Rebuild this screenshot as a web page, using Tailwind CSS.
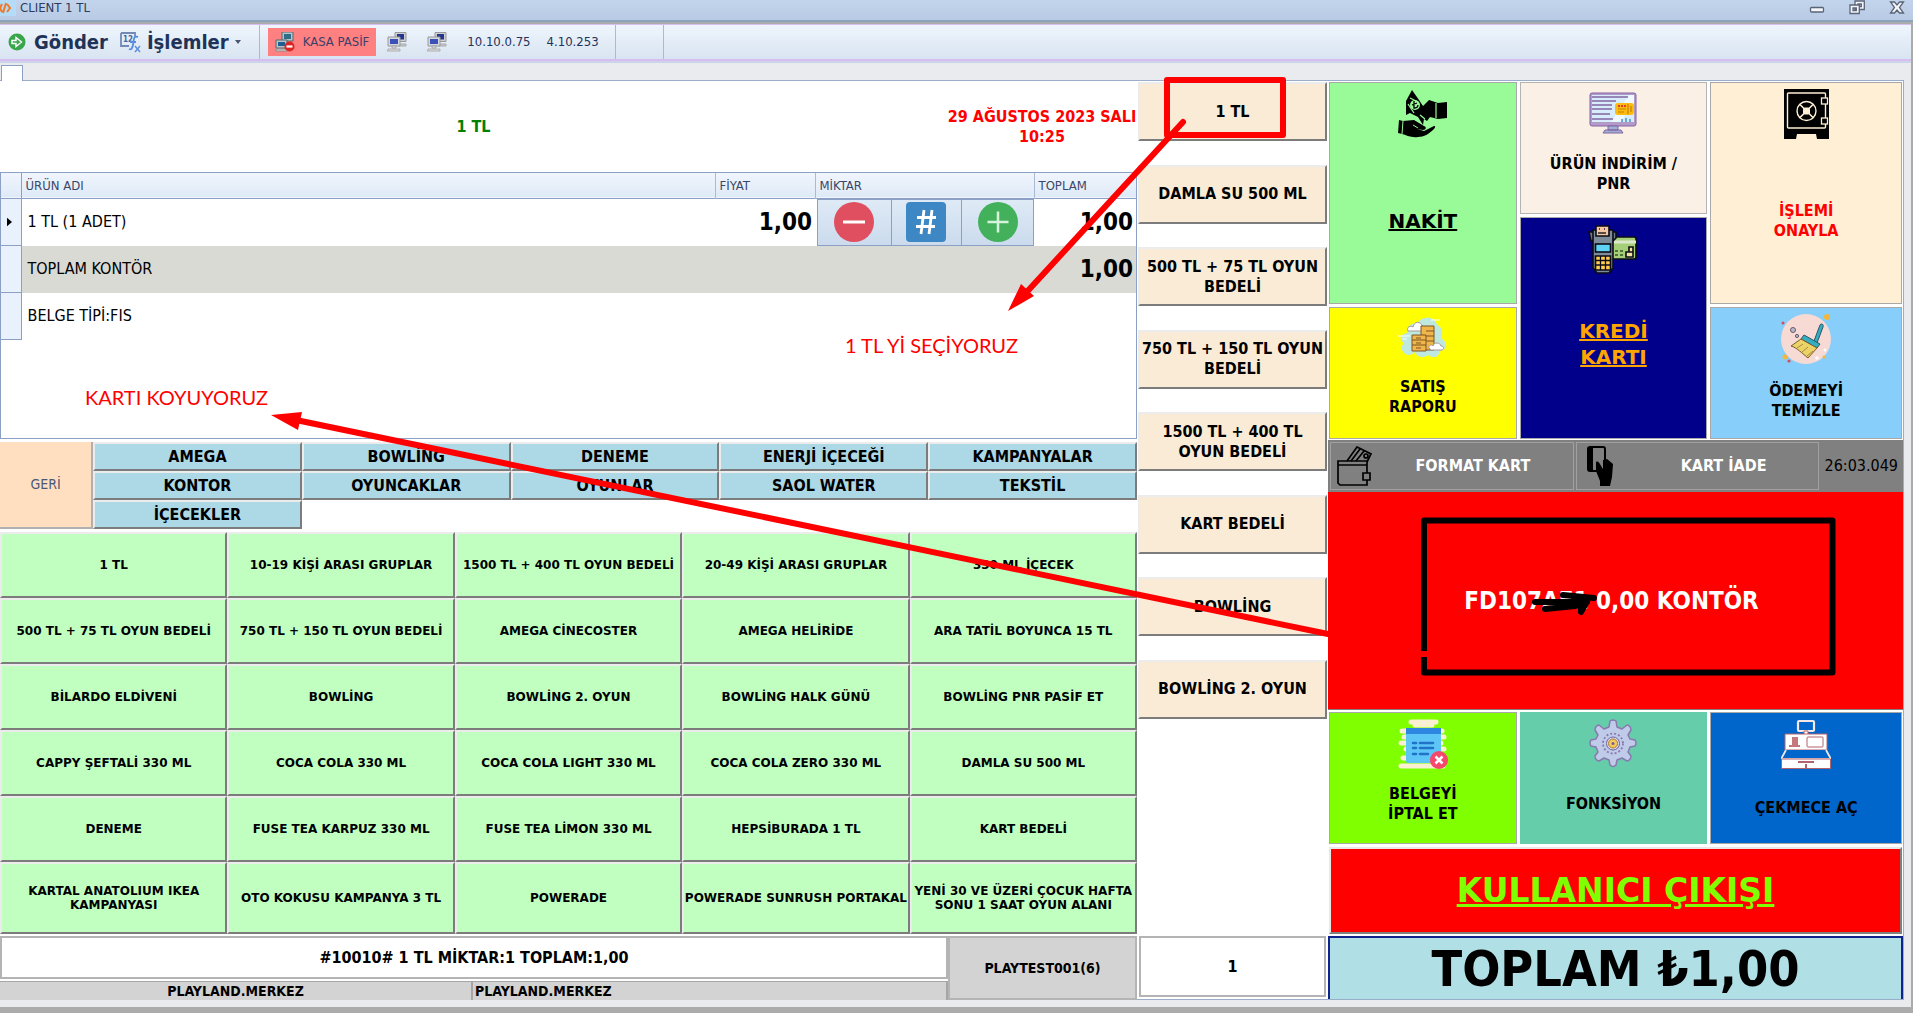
<!DOCTYPE html>
<html lang="tr">
<head>
  <meta charset="UTF-8" />
  <meta name="viewport" content="width=device-width, initial-scale=1.0"/>
  <title>CLIENT 1 TL</title>
  <script src="https://cdn.jsdelivr.net/npm/@tailwindcss/browser@4"></script>
</head>
<body class="relative min-h-screen flex flex-col bg-[#ababab] text-black font-['DejaVu_Sans_Condensed','Noto_Sans',sans-serif]">

  <!-- window title bar -->
  <header class="h-[22px] flex items-start justify-between bg-linear-to-b from-[#c3d5ec] to-[#b9cbe4] border-b-2 border-[#8ba3bd] text-[#2c3b5e]">
    <div class="flex items-center gap-1">
      <svg class="w-4 h-4" viewBox="0 0 16 16"><rect width="16" height="16" fill="#b4dcf8"/><path d="M2 4 0 8l2 4M7 4l3 4-3 4M6 3 3 13" fill="none" stroke="#f07828" stroke-width="2"/></svg>
      <h1 class="text-[13px] leading-4">CLIENT 1 TL</h1>
    </div>
    <div class="flex items-center gap-6 pr-2">
      <button aria-label="Küçült"><svg class="w-4 h-4" viewBox="0 0 16 16"><rect x="1.500" y="7.500" width="13" height="4.500" rx="1" fill="#f4f6fa" stroke="#5a6478" stroke-width="1.300"/></svg></button>
      <button aria-label="Geri yükle"><svg class="w-4 h-4" viewBox="0 0 16 16" fill="#f4f6fa" stroke="#5a6478" stroke-width="1.300"><path d="M6 1h9.300v8.500H6zM9 4h3.300v2.500H9z" fill-rule="evenodd"/><path d="M1 5h9.300v8.500H1zM4 8h3.300v2.500H4z" fill-rule="evenodd"/></svg></button>
      <button aria-label="Kapat"><svg class="w-4 h-4" viewBox="0 0 16 16"><path d="M1.500 2h4L8 5l2.500-3h4L10.500 7.500l4 5.500h-4L8 10l-2.500 3h-4l4-5.500z" fill="#f4f6fa" stroke="#5a6478" stroke-width="1.300"/></svg></button>
    </div>
  </header>

  <!-- toolbar -->
  <nav class="mt-[2px] mr-[2px] h-[37px] shrink-0 flex items-center border-t border-b-2 border-[#d8bdf0] bg-linear-to-b from-[#eff5fd] to-[#d8e4f1] text-[#1f3358]">
    <button class="ml-2 flex items-center gap-2 text-[20px] leading-6 font-bold">
      <svg class="w-[18px] h-[18px]" viewBox="0 0 18 18"><circle cx="9" cy="9" r="8.500" fill="#3aa64c"/><path d="M4 7.500h4V4.500L13.500 9 8 13.500v-3H4z" fill="#3aa64c" stroke="#fff" stroke-width="1.400"/></svg>
      Gönder
    </button>
    <button class="ml-3 flex items-center gap-[6px] text-[20px] leading-6 font-bold">
      <svg class="w-[21px] h-[21px]" viewBox="0 0 21 21"><path d="M1 1h14v4M1 1v13h8" fill="none" stroke="#7389b5" stroke-width="1.800"/><text x="3" y="10" font-size="8" fill="#4a66a0">12</text><path d="M18 5c-5-2-4 4-5 8s-2 5-4 4M10 10h6" fill="none" stroke="#5a8de0" stroke-width="1.900"/><path d="m15 14 5 6m0-6-5 6" stroke="#5a8de0" stroke-width="1.400"/></svg>
      İşlemler
      <svg class="w-[6px] h-1" viewBox="0 0 6 4"><path d="M0 0h6L3 4z" fill="#4a5670"/></svg>
    </button>
    <div class="ml-[18px] h-full border-l border-[#a9bbd4]"></div>
    <button class="ml-2 h-7 px-[7px] flex items-center gap-2 bg-[#ff8080] text-[13px] text-[#3a3f68]">
      <svg class="w-5 h-5" viewBox="0 0 20 20"><path d="M7 0h11v9H7z" fill="#b9c4c8" stroke="#55666e"/><path d="M9 2h7v5H9z" fill="#2e6e88"/><path d="M1 8h11v8H1z" fill="#b9c4c8" stroke="#55666e"/><path d="M3 10h7v4H3z" fill="#1e5e90"/><path d="M1 17h11v2H1z" fill="#ddd" stroke="#888"/><circle cx="14.500" cy="14.500" r="5" fill="#df2424"/><path d="M11.500 14.500h6" stroke="#fff" stroke-width="2.200"/></svg>
      KASA PASİF
    </button>
    <svg class="ml-[11px] w-5 h-5" viewBox="0 0 20 20"><path d="M8 .5h11v9H8z" fill="#c9ced3" stroke="#999"/><path d="M10 2h7v5.500h-7z" fill="#27348e"/><path d="M12 12h7v2h-7z" fill="#ccc" stroke="#aaa"/><path d="M1 5h12v9H1z" fill="#d4d8dc" stroke="#999"/><path d="M3 7h8v5H3z" fill="#3b50b8"/><path d="M5 14h4v2H5zM1 17h12v2H0z" fill="#ddd" stroke="#999" stroke-width=".7"/></svg>
    <svg class="ml-5 w-5 h-5" viewBox="0 0 20 20"><path d="M8 .5h11v9H8z" fill="#c9ced3" stroke="#999"/><path d="M10 2h7v5.500h-7z" fill="#27348e"/><path d="M12 12h7v2h-7z" fill="#ccc" stroke="#aaa"/><path d="M1 5h12v9H1z" fill="#d4d8dc" stroke="#999"/><path d="M3 7h8v5H3z" fill="#3b50b8"/><path d="M5 14h4v2H5zM1 17h12v2H0z" fill="#ddd" stroke="#999" stroke-width=".7"/></svg>
    <span class="ml-5 text-[13px]">10.10.0.75</span>
    <span class="ml-4 text-[13px]">4.10.253</span>
    <div class="ml-4 w-[49px] h-full border-x border-[#a9bbd4]"></div>
  </nav>

  <div class="flex-1 flex flex-col mr-[2px] mb-[6px] pr-[7px] pb-[7px] bg-[#eaebef] border-t-2 border-[#ccd4ea]">
    <div class="h-[17px] flex items-end">
      <div class="relative z-10 ml-px w-[22px] h-4 -mb-px bg-white border border-b-0 border-[#8ba0c4]"></div>
    </div>

    <main class="flex-1 grid grid-cols-[minmax(0,1137fr)_minmax(0,191fr)_minmax(0,575fr)] bg-white border-t border-r border-b border-[#9aadcb]">

      <!-- left: document, categories, products -->
      <section class="flex flex-col">
        <div class="h-[91px] grid grid-cols-[947fr_190fr] items-center text-center font-bold text-[16px] leading-5">
          <div class="text-[#008000]">1 TL</div>
          <div class="text-[#ff0000] whitespace-nowrap">29 AĞUSTOS 2023 SALI<br>10:25</div>
        </div>

        <div class="h-[267px] border border-[#8ba0c4]">
          <table class="w-full table-fixed border-collapse text-[16px]">
            <colgroup><col class="w-5"><col><col class="w-[100px]"><col class="w-[219px]"><col class="w-[102px]"></colgroup>
            <thead>
              <tr class="h-[25px] bg-linear-to-b from-[#f0f5fd] to-[#dfeaf7] text-[13px] text-[#3a4668] text-left border-b border-[#8ba0c4]">
                <th class="border-r border-[#8ba0c4]"></th>
                <th class="px-1 font-normal border-r border-[#a9bbd4]">ÜRÜN ADI</th>
                <th class="px-1 font-normal border-r border-[#a9bbd4]">FİYAT</th>
                <th class="px-1 font-normal border-r border-[#a9bbd4]">MİKTAR</th>
                <th class="px-1 font-normal">TOPLAM</th>
              </tr>
            </thead>
            <tbody>
              <tr class="h-[47px]">
                <td class="bg-[#e8f1fc] border-r border-b border-[#8ba0c4]"><svg class="ml-[6px] w-[5px] h-[10px]" viewBox="0 0 6 10"><path d="M0 0l6 5-6 5z"/></svg></td>
                <td class="px-[6px]">1 TL (1 ADET)</td>
                <td class="pr-[3px] text-right text-[24px] font-bold">1,00</td>
                <td class="p-0 pl-[2px]">
                  <div class="h-[47px] grid grid-cols-[74fr_71fr_71fr] border border-[#8ba0c4] divide-x divide-[#8ba0c4] bg-linear-to-b from-[#dfeaf6] to-[#cbdbed]">
                    <button class="flex items-center justify-center" aria-label="Azalt"><svg class="size-10" viewBox="0 0 40 40"><circle cx="20" cy="20" r="20" fill="#e04f5f"/><path d="M9 20h22" stroke="#fff" stroke-width="3"/></svg></button>
                    <button class="flex items-center justify-center" aria-label="Miktar gir"><svg class="size-10" viewBox="0 0 40 40"><rect width="40" height="40" rx="4" fill="#3c87c4"/><path d="M18 8l-3 24M26 8l-3 24M11 15.500h19M10 24.500h19" stroke="#fff" stroke-width="2.800"/></svg></button>
                    <button class="flex items-center justify-center" aria-label="Arttır"><svg class="size-10" viewBox="0 0 40 40"><circle cx="20" cy="20" r="20" fill="#43b05c"/><path d="M9.500 20h21M20 9.500v21" stroke="#d8f3dc" stroke-width="2.500"/></svg></button>
                  </div>
                </td>
                <td class="pr-[3px] text-right text-[24px] font-bold">1,00</td>
              </tr>
              <tr class="h-[47px]">
                <td class="bg-[#e8f1fc] border-r border-b border-[#8ba0c4]"></td>
                <td colspan="3" class="px-[6px] bg-[#d9dad4]">TOPLAM KONTÖR</td>
                <td class="pr-[3px] text-right text-[24px] font-bold bg-[#d9dad4]">1,00</td>
              </tr>
              <tr class="h-[47px]">
                <td class="bg-[#e8f1fc] border-r border-b border-[#8ba0c4]"></td>
                <td colspan="4" class="px-[6px]">BELGE TİPİ:FIS</td>
              </tr>
            </tbody>
          </table>
        </div>

        <div class="mt-[3px] h-[87px] flex">
          <button class="w-[93px] bg-[#ffdfc0] border-r-2 border-b-2 border-[#b0b0b0] text-[14px] text-[#4a5878]">GERİ</button>
          <div id="categories" class="flex-1 grid grid-cols-5 grid-rows-3"></div>
        </div>

        <div id="products" class="mt-[3px] flex-1 grid grid-cols-5 grid-rows-[repeat(5,66px)_1fr]"></div>

        <div class="mt-[2px] h-[63px] grid grid-cols-[948fr_189fr]">
          <div class="flex flex-col">
            <input type="text" readonly aria-label="Son işlem" value="#10010# 1 TL MİKTAR:1 TOPLAM:1,00" class="w-full h-[43px] border-2 border-[#b4b4b4] bg-white text-center font-bold text-[16px]">
            <div class="mt-[2px] flex-1 grid grid-cols-2 border-t border-r-2 border-[#a6a6a6] bg-[#d3d3d3] font-bold text-[14px] leading-[18px]">
              <div class="text-center border-r-2 border-[#a6a6a6]">PLAYLAND.MERKEZ</div>
              <div class="pl-[2px]">PLAYLAND.MERKEZ</div>
            </div>
          </div>
          <div class="flex items-center justify-center bg-[#d3d3d3] border-2 border-[#b4b4b4] font-bold text-[14px]">PLAYTEST001(6)</div>
        </div>
      </section>

      <!-- middle: quick buttons -->
      <section class="flex flex-col justify-between">
        <div id="quick" class="h-[661px] grid grid-rows-8 pt-px px-px"></div>
        <div class="px-[2px] pb-[2px]">
          <input type="text" readonly aria-label="Adet" value="1" class="w-full h-[61px] border-2 border-[#b4b4b4] bg-white text-center font-bold text-[16px]">
        </div>
      </section>

      <!-- right: actions -->
      <section class="flex flex-col font-bold text-[16px] leading-5">
        <div class="mt-px px-px grid grid-cols-[188fr_188fr_192fr] grid-rows-[132px_87px_132px] gap-[3px]">
          <button class="row-span-2 flex flex-col items-center pt-[6px] border border-[#a8a8a8] bg-[#98fb98]">
            <svg class="size-[50px]" viewBox="0 0 50 50">
              <path d="M8 12 14 1l7 10 4 6 6-6 9 3 9-1v16l-9 1-8-2-3 4-3-2-1 6-5-8-8-4-4 2z"/>
              <path d="M38 14v15M10 15l6 9M12 9l6 3M22 26l5 4" stroke="#98fb98" stroke-width="1.200" fill="none"/>
              <circle cx="17" cy="16" r="5" fill="#98fb98"/><path d="M16 12v7c2 0 4-1 4-3M14 16l5-2" stroke="#000" stroke-width="1.300" fill="none"/>
              <path d="M1 31l4 1 11-1 10 6c3 1 2 4-1 4l-6-1 7 2 10-5c2 0 1 2 0 3-5 5-10 8-16 8-7 1-12-2-16-3l-4-1z"/>
              <path d="M5 32l-1 13M15 36l5 3" stroke="#98fb98" stroke-width="1"/>
            </svg>
            <span class="flex-1 flex items-center font-['DejaVu_Sans',sans-serif] text-[20px] leading-[26px] underline">NAKİT</span>
          </button>

          <button class="flex flex-col items-center pt-[6px] border border-[#b4b4b4] bg-[#faf0e6]">
            <svg class="size-[50px]" viewBox="0 0 50 50">
              <rect x="2" y="4" width="46" height="33" rx="2" fill="#b39ac8" stroke="#8365a3"/><rect x="4" y="6" width="42" height="27" fill="#d7edfb"/>
              <path d="m23 33 18-27h5v7L33 33z" fill="#edf8ff"/>
              <path d="M4 8h36M4 12h24M4 16h20M4 20h20M4 25h18M4 30h21" stroke="#8365a3" stroke-width="1.600"/>
              <rect x="27" y="14" width="19" height="12" rx="3" fill="#fdbb10"/><path d="M30 17h8" stroke="#e23b2e" stroke-width="1.800" stroke-dasharray="2 1"/><path d="M30 20h8M30 23h6M40 15v10M43 17v6" stroke="#c78100" stroke-width="1.200"/>
              <path d="M34 30v3M38 29v4M42 30v3" stroke="#4694c8" stroke-width="1.500"/>
              <path d="M20 37h10v4H20zM17 41h16l2 3H15z" fill="#9fb0d4" stroke="#8365a3"/>
            </svg>
            <span class="flex-1 flex items-center pb-1">ÜRÜN İNDİRİM /<br>PNR</span>
          </button>

          <button class="row-span-2 flex flex-col items-center pt-[6px] border border-[#a8a8a8] bg-[#ffefd5] text-[#ff0000]">
            <svg class="size-[50px]" viewBox="0 0 50 50">
              <path d="M3 0h45v50H36l-1-5H16l-1 5H3z"/>
              <rect x="6.500" y="4" width="38" height="35" rx="1" fill="none" stroke="#ffefd5" stroke-width="1.400"/>
              <rect x="40.500" y="9" width="6" height="6" fill="#000" stroke="#ffefd5" stroke-width="1.300"/><rect x="40.500" y="29" width="6" height="6" fill="#000" stroke="#ffefd5" stroke-width="1.300"/>
              <circle cx="25.500" cy="22" r="9.500" fill="none" stroke="#ffefd5" stroke-width="1.400"/><path d="m19 15.500 13 13m0-13-13 13" stroke="#ffefd5" stroke-width="1.600"/><rect x="22" y="18.500" width="7" height="7" rx="2" fill="#ffefd5"/>
            </svg>
            <span class="flex-1 flex items-center">İŞLEMİ<br>ONAYLA</span>
          </button>

          <button class="row-span-2 flex flex-col items-center pt-[6px] pb-6 border border-[#a8a8a8] bg-[#00008b] text-[#ffa500]">
            <svg class="size-[50px]" viewBox="0 0 50 50" stroke="#0b0b14" stroke-width="1.600">
              <rect x="22" y="13" width="26" height="22" rx="2" fill="#a5d077"/><path d="M23 18h25" stroke="#dbe8cc" stroke-width="3"/><path d="M27 27h3m2 0h3M27 31h3m2 0h3" stroke="#35502b"/><path d="M38 28h7v5h-7zM41 23h4v5h-4z" fill="#f2e3a0"/>
              <path d="M1 8h6v9H3zM22 8h6v6l-3 3h-3z" fill="#6f7b88"/>
              <path d="M5 6h20v38l-4 5H9l-4-5z" fill="#7d8c99"/><path d="M8 2h13v10H8z" fill="#f4c7a4"/><path d="M10 9h8M11 5h1m4 0h1" stroke="#222"/>
              <rect x="7.500" y="20" width="15" height="8" fill="#5fd3f3"/><path d="M7.500 32h15v14h-15z" fill="#ffce50"/><path d="M7.500 36.500h15M7.500 41h15M12.500 32v14M17.500 32v14" stroke-width="1.300"/>
            </svg>
            <span class="flex-1 flex items-center font-['DejaVu_Sans',sans-serif] text-[20px] leading-[26px] underline">KREDİ<br>KARTI</span>
          </button>

          <button class="flex flex-col items-center pt-[6px] border border-[#a8a8a8] bg-[#ffff00]">
            <svg class="size-[50px]" viewBox="0 0 50 50">
              <path d="M11 41c-6 0-10-7-5-12-6-3-3-9 3-10-1-7 6-11 10-9 4-9 19-8 20 1 6 2 6 9 4 13 8 5 5 13-1 13-2 8-8 7-12 4-5 4-11 2-13-3-2 2-4 3-6 3z" fill="#bfe9e0"/>
              <path d="M0 22h12M4 25h5M33 6h9" stroke="#fff"/>
              <path d="M10 17c-2-4 3-6 5-4 1-6 8-6 9-1 3 0 4 4 1 5z" fill="#fff" stroke="#a59a98"/>
              <g fill="#f0b64a" stroke="#7c5426"><path d="M23 12h13v24H23z"/><path d="M14 21h14v16H14z"/><path d="M14 26h14M14 31h14M28 17h8M28 22h8M28 27h8M18 24h5m-5 5h5m-5 5h5" fill="none"/></g>
              <path d="M31 34c-1-3 3-4 4-2 1-4 7-4 8 0 4 0 3 4 0 4H33z" fill="#fff" stroke="#a59a98"/>
            </svg>
            <span class="flex-1 flex items-center pb-2">SATIŞ<br>RAPORU</span>
          </button>

          <button class="flex flex-col items-center pt-[6px] border border-[#a8a8a8] bg-[#87cefa]">
            <svg class="size-[50px]" viewBox="0 0 50 50">
              <circle cx="25" cy="25" r="25" fill="#f8dad4"/><circle cx="12" cy="16" r="2.500" fill="#b9b9c9" stroke="#6a5a6a"/><circle cx="16" cy="22" r="1.600" fill="#b9b9c9" stroke="#6a5a6a"/>
              <path d="m33 27 6-16c1-2 4-1 3 2l-6 16z" fill="#35aebf" stroke="#2c5468"/><path d="m23 21 16 9-3 4-16-9z" fill="#35aebf" stroke="#2c5468"/>
              <path d="M20 25 10 32c5 1 12 8 17 12l9-10z" fill="#ecd367" stroke="#7a5d31"/><path d="m16 34 6-4m-1 8 6-5m-1 9 6-5" stroke="#a98a3b"/>
              <circle cx="46" cy="3" r="3" fill="#f3b63a"/><circle cx="2" cy="9" r="1.500" fill="#d94a63"/><circle cx="4" cy="43" r="2.500" fill="#f3b63a"/><circle cx="8" cy="47" r="1.600" fill="#d94a63"/><circle cx="36" cy="44" r="1.700" fill="#fff"/><circle cx="44" cy="36" r="1.400" fill="#fff"/><circle cx="43" cy="43" r="1.500" fill="#f3b63a"/>
            </svg>
            <span class="flex-1 flex items-center">ÖDEMEYİ<br>TEMİZLE</span>
          </button>
        </div>

        <div class="mt-px h-[52px] flex items-stretch bg-[#808080] p-[2px] gap-[2px] text-white">
          <button class="flex-[243] flex items-center border border-[#a0a0a0]">
            <svg class="ml-[6px] w-9 h-10" viewBox="0 0 36 40" fill="none" stroke="#000" stroke-width="1.700"><path d="M1 15h29v24H3l-2-2zM1 15v4h29"/><path d="M10 15 20 1l14 7-4 8M14 15l9-12M19 15l8-10"/><circle cx="29" cy="10" r="2"/><path d="M26 27h7v7h-7z" fill="#808080"/></svg>
            <span class="flex-1 text-center">FORMAT KART</span>
          </button>
          <button class="flex-[243] flex items-center border border-[#a0a0a0]">
            <svg class="ml-[10px] w-[26px] h-10" viewBox="0 0 26 40"><rect x="1" y="1" width="17" height="24" rx="2" fill="none" stroke="#000" stroke-width="2"/><path d="M4 2v22" stroke="#000" stroke-width="4"/><path d="M9 16c3-2 4 3 7 7V14l4-1 6 5-1 13-2 9H13V35L9 25z"/></svg>
            <span class="flex-1 text-center pl-4">KART İADE</span>
          </button>
          <span class="flex-[80] flex items-center justify-center font-normal text-black">26:03.049</span>
        </div>

        <div class="flex-1 flex items-center justify-center pr-2 bg-[#ff0000] border-b border-[#808080] text-white text-[24px]">FD107AF1 0,00 KONTÖR</div>

        <div class="mt-[2px] px-px h-[132px] grid grid-cols-[188fr_188fr_192fr] gap-[3px]">
          <button class="flex flex-col items-center pt-[6px] border border-[#a8a8a8] bg-[#7fff00]">
            <svg class="size-[50px]" viewBox="0 0 50 50">
              <g stroke="#fbf0d2" stroke-width="5" stroke-linecap="round"><path d="M13 3h25M17 6h17M4 12h40M6 18h40M3 24h40M8 30h38M5 39h39M3 47h42"/></g>
              <rect x="8" y="9" width="35" height="35" rx="2" fill="#5ec5f7"/><path d="M8 9h35v6H8z" fill="#2f86e0"/>
              <path d="M15 24h3M15 29h3M15 35h3M22 24h13M22 29h13M22 35h8" stroke="#2173c8" stroke-width="2.600" stroke-linecap="round"/>
              <circle cx="41" cy="41" r="9" fill="#f7476b"/><path d="m37.500 37.500 7 7m0-7-7 7" stroke="#fff" stroke-width="2.600"/>
            </svg>
            <span class="flex-1 flex items-center pb-1">BELGEYİ<br>İPTAL ET</span>
          </button>
          <button class="flex flex-col items-center pt-[6px] bg-[#66cdaa]">
            <svg class="size-[50px]" viewBox="0 0 50 50">
              <g fill="#bfcbe8" stroke="#8a79b0" stroke-width="1.500" stroke-linejoin="round"><path d="m21 9 1-6q3-2 6 0l1 6 5 2 5-4q4 1 4 5l-3 5 2 4 5 1q2 3 0 6l-5 1-2 5 3 4q0 4-4 5l-5-3-5 2-1 5q-3 3-6 0l-1-5-5-2-5 3q-4-1-4-5l3-4-2-5-5-1q-2-3 0-6l5-1 2-4-3-5q0-4 4-5l5 4z"/></g>
              <circle cx="25" cy="25.500" r="10" fill="none" stroke="#8a79b0" stroke-width="1.800" stroke-dasharray="2 2"/><circle cx="25" cy="25.500" r="6.500" fill="#d6dcf0" stroke="#75609b"/><circle cx="25" cy="25.500" r="4.500" fill="#f8ca57" stroke="#a87b3a"/><circle cx="25" cy="25.500" r="1.500" fill="#75609b"/>
            </svg>
            <span class="flex-1 flex items-center pb-1">FONKSİYON</span>
          </button>
          <button class="flex flex-col items-center pt-[6px] border border-[#a8a8a8] bg-[#0066cc]">
            <svg class="size-[50px]" viewBox="0 0 50 50" stroke="#b4636c" stroke-width="1">
              <rect x="17" y="2" width="16" height="10" rx="1" fill="#0066cc" stroke="#f5e8e8" stroke-width="2.200"/><path d="M23 12h4v4h-4z" fill="#fff"/>
              <path d="M4 15h42v16H4z" fill="#fff"/><path d="M11 18h6v8h2v2H8v-2h3z" fill="#c4777c" stroke="none"/><rect x="26" y="18" width="16" height="10" rx="1" fill="#fff"/>
              <path d="m5 31-5 9h50l-5-9" fill="#0066cc" stroke="#f5e8e8" stroke-width="1.800"/><path d="M.500 40h49v9.500H.500z" fill="#fff"/><path d="M17 43h16M25 45v4" stroke-width="2"/>
            </svg>
            <span class="flex-1 flex items-center pt-1">ÇEKMECE AÇ</span>
          </button>
        </div>

        <button class="mt-[3px] mx-px h-[87px] bg-[#ff0000] border-2 border-t-[#e8e8e8] border-l-[#e8e8e8] border-r-[#808080] border-b-[#808080] font-['DejaVu_Sans',sans-serif] text-[33px] leading-10 text-[#7fff00] underline">KULLANICI ÇIKIŞI</button>

        <div class="mt-[2px] h-[63px] flex items-center justify-center bg-[#b0e0e6] border-2 border-b-0 border-[#10238c] text-[50px] leading-[60px]">TOPLAM ₺1,00</div>
      </section>
    </main>
  </div>

  <!-- training notes drawn over the screen -->
  <svg class="absolute inset-0 w-full h-full pointer-events-none" viewBox="0 0 1913 1013" preserveAspectRatio="none">
    <g fill="none" stroke="#ff0000" stroke-width="6" stroke-linecap="round" stroke-linejoin="round">
      <path d="M1167 80h116v55h-116z"/>
      <path d="M1183 122 1024 295"/>
      <path d="M1328 634 296 420"/>
    </g>
    <path d="M1008 311l13-27 13 12zM271 415l31-3-4 18z" fill="#ff0000"/>
    <path d="M1424 651V520.500h408.500v152H1424V657" fill="none" stroke="#000" stroke-width="6" stroke-linejoin="round"/>
    <path d="M1535 602h52M1563 595l31 3M1545 609l40-4-4 7M1581 600v11" fill="none" stroke="#000" stroke-width="6" stroke-linecap="round"/>
    <g fill="#ff0000" class="font-[Lato,sans-serif] text-[20px]">
      <text x="845" y="353">1 TL Yİ SEÇİYORUZ</text>
      <text x="85" y="405">KARTI KOYUYORUZ</text>
    </g>
  </svg>

  <script>
    let categories = ["AMEGA", "BOWLİNG", "DENEME", "ENERJİ İÇECEĞİ", "KAMPANYALAR", "KONTOR", "OYUNCAKLAR", "OYUNLAR", "SAOL WATER", "TEKSTİL", "İÇECEKLER"];

    let products = [
      "1 TL", "10-19 KİŞİ ARASI GRUPLAR", "1500 TL + 400 TL OYUN BEDELİ", "20-49 KİŞİ ARASI GRUPLAR", "330 ML İÇECEK",
      "500 TL + 75 TL OYUN BEDELİ", "750 TL + 150 TL OYUN BEDELİ", "AMEGA CİNECOSTER", "AMEGA HELİRİDE", "ARA TATİL BOYUNCA 15 TL",
      "BİLARDO ELDİVENİ", "BOWLİNG", "BOWLİNG 2. OYUN", "BOWLİNG HALK GÜNÜ", "BOWLİNG PNR PASİF ET",
      "CAPPY ŞEFTALİ 330 ML", "COCA COLA 330 ML", "COCA COLA LIGHT 330 ML", "COCA COLA ZERO 330 ML", "DAMLA SU 500 ML",
      "DENEME", "FUSE TEA KARPUZ 330 ML", "FUSE TEA LİMON 330 ML", "HEPSİBURADA 1 TL", "KART BEDELİ",
      "KARTAL ANATOLIUM IKEA KAMPANYASI", "OTO KOKUSU KAMPANYA 3 TL", "POWERADE", "POWERADE SUNRUSH PORTAKAL", "YENİ 30 VE ÜZERİ ÇOCUK HAFTA SONU 1 SAAT OYUN ALANI"
    ];

    let quick = ["1 TL", "DAMLA SU 500 ML", "500 TL + 75 TL OYUN BEDELİ", "750 TL + 150 TL OYUN BEDELİ", "1500 TL + 400 TL OYUN BEDELİ", "KART BEDELİ", "BOWLİNG", "BOWLİNG 2. OYUN"];

    function fill(id, names, cls) {
      let box = document.getElementById(id);
      names.forEach((name) => {
        let btn = document.createElement("button");
        btn.className = cls;
        btn.innerText = name;
        box.appendChild(btn);
      });
    }

    // raised buttons: light top/left edge, dark bottom/right edge
    fill("categories", categories, "border-2 border-t-[#ececec] border-l-[#ececec] border-r-[#7c7c7c] border-b-[#7c7c7c] bg-[#add8e6] font-bold text-[16px] leading-5");
    fill("products", products, "border-2 border-t-[#ececec] border-l-[#ececec] border-r-[#7c7c7c] border-b-[#7c7c7c] bg-[#c0ffc0] font-['DejaVu_Sans',sans-serif] font-bold text-[12px] leading-[14px]");
    fill("quick", quick, "h-[59px] border-2 border-t-[#ececec] border-l-[#ececec] border-r-[#7c7c7c] border-b-[#7c7c7c] bg-[#faebd7] font-bold text-[16px] leading-5");
  </script>
</body>
</html>
